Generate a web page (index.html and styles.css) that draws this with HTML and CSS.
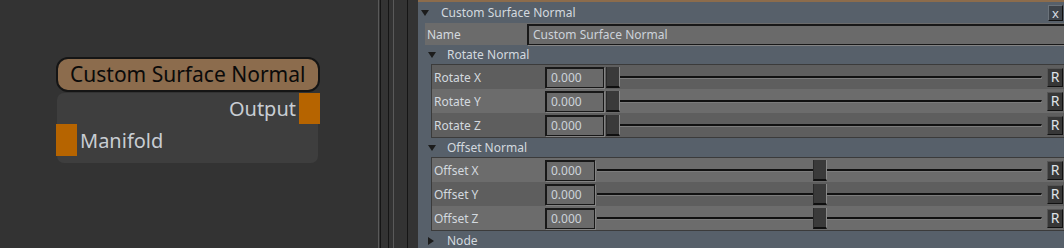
FILE: index.html
```html
<!DOCTYPE html>
<html lang="en">
  <head>
    <meta charset="UTF-8" />
    <title>Custom Surface Normal</title>
    <link rel="stylesheet" href="styles.css">
  </head>
  <body>
    <div class="app">
      <!-- node graph -->
      <div class="canvas">
        <div class="node">
          <div class="node-title">Custom Surface Normal</div>
          <div class="node-body">
            <div class="socket socket-out">
              <span>Output</span>
              <i class="port"></i>
            </div>
            <div class="socket socket-in">
              <i class="port"></i>
              <span>Manifold</span>
            </div>
          </div>
        </div>
      </div>

      <div class="splitter"></div>

      <!-- attribute editor -->
      <div class="panel">
        <div class="panel-head">
          <span class="tri"></span>
          <span class="head-text">Custom Surface Normal</span>
          <button class="close-btn">x</button>
        </div>

        <div class="name-row">
          <label>Name</label>
          <div class="field field-wide">Custom Surface Normal</div>
        </div>

        <div class="group-head"><span class="tri"></span>Rotate Normal</div>
        <div class="group">
          <div class="prop prop-dark">
            <label>Rotate X</label>
            <div class="field">0.000</div>
            <div class="slider"><div class="track"></div><div class="handle" style="left: 0%"></div></div>
            <button class="reset">R</button>
          </div>
          <div class="prop">
            <label>Rotate Y</label>
            <div class="field">0.000</div>
            <div class="slider"><div class="track"></div><div class="handle" style="left: 0%"></div></div>
            <button class="reset">R</button>
          </div>
          <div class="prop prop-dark">
            <label>Rotate Z</label>
            <div class="field">0.000</div>
            <div class="slider"><div class="track"></div><div class="handle" style="left: 0%"></div></div>
            <button class="reset">R</button>
          </div>
        </div>

        <div class="group-head"><span class="tri"></span>Offset Normal</div>
        <div class="group group-offset">
          <div class="prop">
            <label>Offset X</label>
            <div class="field">0.000</div>
            <div class="slider"><div class="track"></div><div class="handle" style="left: 48.5%"></div></div>
            <button class="reset">R</button>
          </div>
          <div class="prop prop-dark">
            <label>Offset Y</label>
            <div class="field">0.000</div>
            <div class="slider"><div class="track"></div><div class="handle" style="left: 48.5%"></div></div>
            <button class="reset">R</button>
          </div>
          <div class="prop">
            <label>Offset Z</label>
            <div class="field">0.000</div>
            <div class="slider"><div class="track"></div><div class="handle" style="left: 48.5%"></div></div>
            <button class="reset">R</button>
          </div>
        </div>

        <div class="group-head"><span class="tri tri-closed"></span>Node</div>
      </div>
    </div>
  </body>
</html>
```

FILE: styles.css
```css
* {
  box-sizing: border-box;
}

body {
  margin: 0;
  background: #333333;
  font-family: "Noto Sans", "Liberation Sans", sans-serif;
}

.app {
  display: flex;
  width: 1064px;
  height: 248px;
  overflow: hidden;
}

/* node graph */
.canvas {
  position: relative;
  width: 378px;
  height: 100%;
  background: #333333;
}

.node {
  position: absolute;
  left: 56px;
  top: 57px;
  width: 264px;
}

.node-title {
  height: 35px;
  padding-left: 12px;
  background: #8c6c4d;
  border: 2px solid #151515;
  border-radius: 12px;
  color: #0a0a0a;
  font-size: 21px;
  line-height: 30px;
  white-space: nowrap;
}

.node-body {
  margin: 1px 2px 0 1px;
  height: 70px;
  background: #3e3e3e;
  border-radius: 7px;
}

.socket {
  display: flex;
  align-items: center;
  color: #c8cdd3;
  font-size: 20px;
}

.socket .port {
  display: block;
  width: 21px;
  background: #b66400;
}

.socket-out {
  justify-content: flex-end;
  height: 31px;
  margin-right: -2px;
}

.socket-out .port {
  height: 31px;
}

.socket-out span {
  margin-right: 3px;
}

.socket-in {
  height: 32px;
  margin-left: -1px;
}

.socket-in .port {
  height: 32px;
}

.socket-in span {
  margin-left: 3px;
}

/* splitter between views */
.splitter {
  width: 40px;
  height: 100%;
  background: linear-gradient(to right,
    #5a5a5a 0, #5a5a5a 1px,
    #333 1px, #333 2px,
    #151515 2px, #151515 3px,
    #333 3px, #333 10px,
    #151515 10px, #151515 11px,
    #333 11px, #333 15px,
    #5a5a5a 15px, #5a5a5a 16px,
    #333 16px, #333 29px,
    #151515 29px, #151515 30px,
    #333 30px);
}

/* attribute editor */
.panel {
  flex: 1;
  height: 100%;
  background: #57606a;
  border-top: 2px solid #8c6c4c;
  color: #d3d9df;
  font-size: 12px;
  overflow: hidden;
}

.tri {
  display: inline-block;
  width: 0;
  height: 0;
  border-left: 4px solid transparent;
  border-right: 4px solid transparent;
  border-top: 6px solid #1c1c1c;
}

.tri-closed {
  border-top: 4px solid transparent;
  border-bottom: 4px solid transparent;
  border-left: 6px solid #1c1c1c;
  border-right: 0;
}

.panel-head {
  display: flex;
  align-items: center;
  height: 21px;
  padding-left: 3px;
}

.panel-head .head-text {
  margin-left: 12px;
}

.close-btn {
  margin-left: auto;
  margin-right: 1px;
  width: 15px;
  height: 16px;
  padding: 0;
  background: #3d434a;
  border: 1px solid #111;
  border-top-color: #6b737b;
  border-left-color: #6b737b;
  color: #d8dde2;
  font: 13px/12px "Noto Sans", sans-serif;
}

.name-row {
  display: flex;
  align-items: center;
  height: 22px;
  margin-left: 7px;
  background: #6b6b6b;
}

.name-row label {
  width: 102px;
  padding-left: 2px;
}

.field {
  height: 21px;
  width: 59px;
  padding-left: 4px;
  background: #6a6a6a;
  border: 1px solid #181818;
  border-top-width: 2px;
  border-left-width: 2px;
  box-shadow: 1px 1px 0 #838383;
  color: #cdd3da;
  line-height: 18px;
}

.field-wide {
  flex: 1;
  margin-right: -4px;
}

.group-head {
  display: flex;
  align-items: center;
  height: 19px;
  padding-left: 10px;
}

.group-head .tri {
  margin-right: 11px;
}

.group-head .tri-closed {
  margin-right: 13px;
}

.group {
  margin-left: 13px;
  border: 1px solid #3b3b3b;
  border-right: 0;
}

.prop {
  display: flex;
  align-items: center;
  height: 24px;
  padding-right: 1px;
  background: #6c6c6c;
}

.prop-dark {
  background: #5e5e5e;
}

.prop label {
  width: 113px;
  padding-left: 2px;
}

.group-offset .field {
  width: 50px;
}

.slider {
  position: relative;
  flex: 1;
  height: 21px;
  margin-left: 2px;
  display: flex;
  align-items: center;
}

.track {
  width: 100%;
  height: 3px;
  border-top: 2px solid #111;
  border-bottom: 1px solid #7c7c7c;
  border-right: 1px solid #7c7c7c;
}

/* slider thumb, placed by value */
.handle {
  position: absolute;
  top: 0;
  width: 14px;
  height: 21px;
  background: #3a3a3a;
  border-left: 1px solid #2a2a2a;
  border-right: 1px solid #8a8a8a;
  border-bottom: 2px solid #0f0f0f;
}

.reset {
  width: 16px;
  height: 19px;
  margin-left: 5px;
  padding: 0;
  background: #373737;
  border: 1px solid #111;
  border-top-color: #555;
  border-left-color: #555;
  color: #dfe3e7;
  font: 14px/16px "Noto Sans", sans-serif;
}
```
